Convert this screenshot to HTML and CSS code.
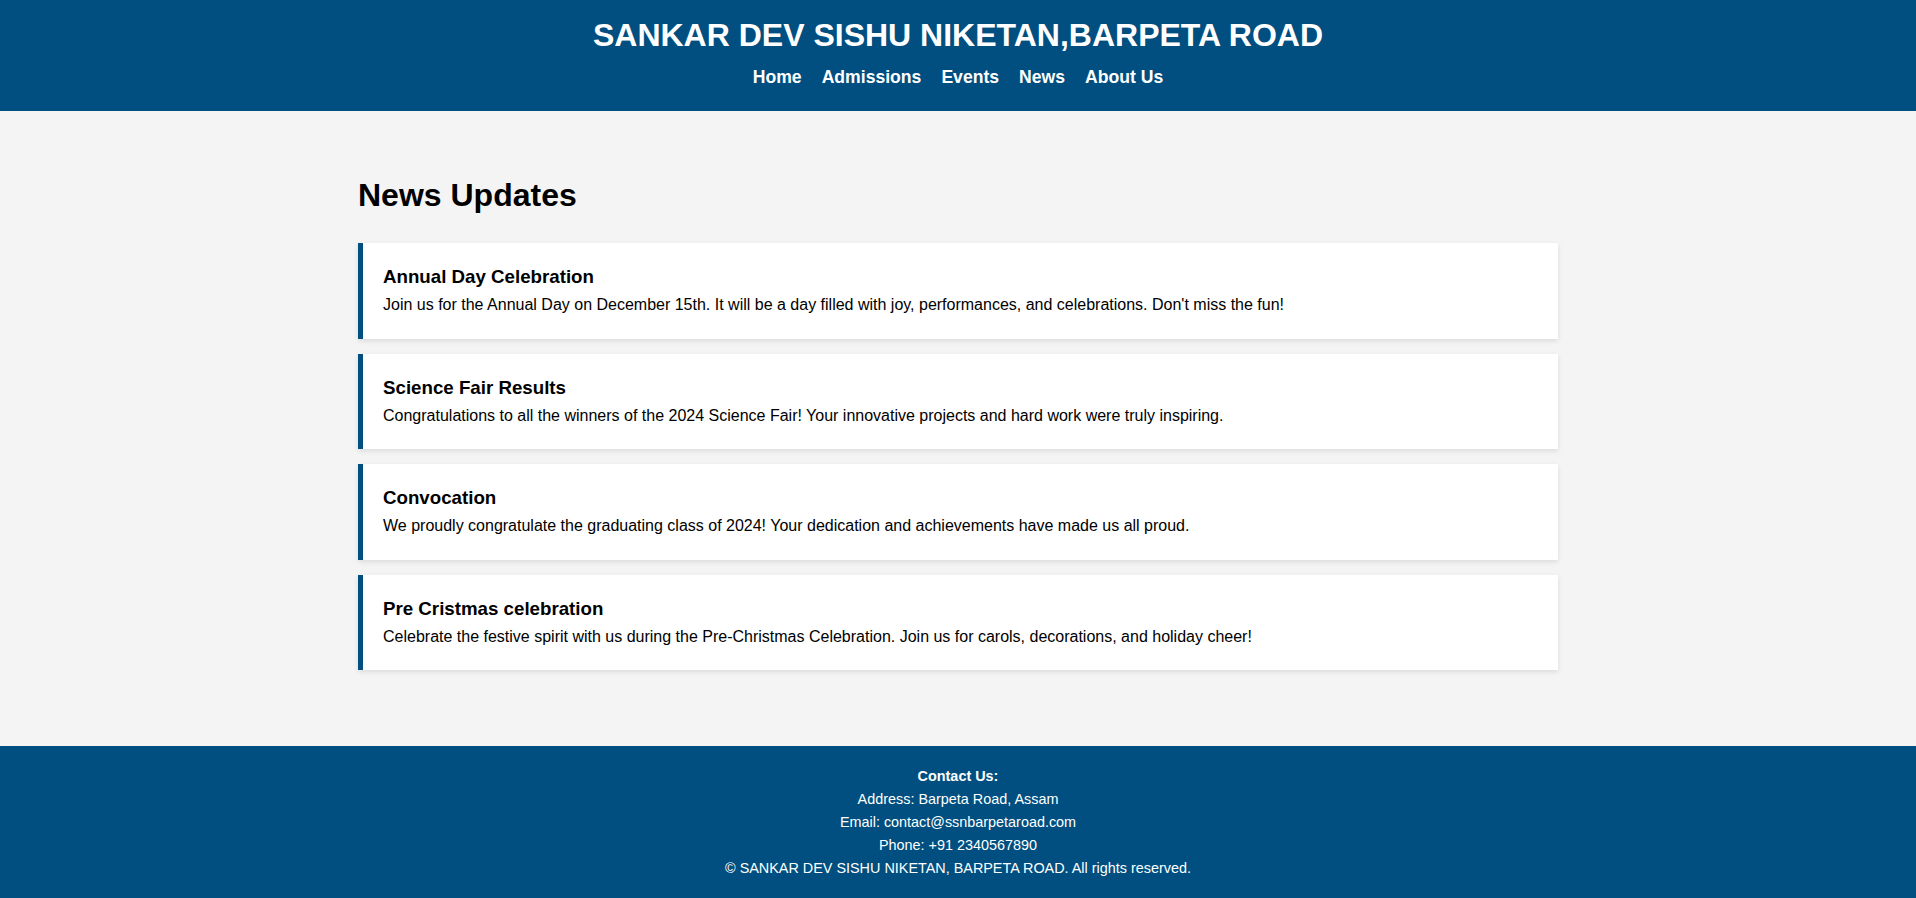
FILE: index.html
```html
<!DOCTYPE html>
<html lang="en">
<head>
<meta charset="utf-8">
<title>News Updates - SANKAR DEV SISHU NIKETAN</title>
<link rel="stylesheet" href="styles.css">
</head>
<body>
<header class="site-header">
  <h1 class="site-title">SANKAR DEV SISHU NIKETAN,BARPETA ROAD</h1>
  <nav class="site-nav">
    <a href="#">Home</a>
    <a href="#">Admissions</a>
    <a href="#">Events</a>
    <a href="#">News</a>
    <a href="#">About Us</a>
  </nav>
</header>
<main class="main">
  <section class="news">
    <h2 class="news-heading">News Updates</h2>
    <article class="news-item">
      <h3>Annual Day Celebration</h3>
      <p>Join us for the Annual Day on December 15th. It will be a day filled with joy, performances, and celebrations. Don't miss the fun!</p>
    </article>
    <article class="news-item">
      <h3>Science Fair Results</h3>
      <p>Congratulations to all the winners of the 2024 Science Fair! Your innovative projects and hard work were truly inspiring.</p>
    </article>
    <article class="news-item">
      <h3>Convocation</h3>
      <p>We proudly congratulate the graduating class of 2024! Your dedication and achievements have made us all proud.</p>
    </article>
    <article class="news-item">
      <h3>Pre Cristmas celebration</h3>
      <p>Celebrate the festive spirit with us during the Pre-Christmas Celebration. Join us for carols, decorations, and holiday cheer!</p>
    </article>
  </section>
</main>
<footer class="site-footer">
  <p><strong>Contact Us:</strong><br>
  Address: Barpeta Road, Assam<br>
  Email: contact@ssnbarpetaroad.com<br>
  Phone: +91 2340567890<br>
  &copy; SANKAR DEV SISHU NIKETAN, BARPETA ROAD. All rights reserved.</p>
</footer>
</body>
</html>
```

FILE: styles.css
```css
* {
  box-sizing: border-box;
}

html, body {
  margin: 0;
  padding: 0;
}

body {
  font-family: "Liberation Sans", Arial, sans-serif;
  background: #f4f4f4;
  color: #000;
}

.site-header {
  background: #004f80;
  color: #fff;
  text-align: center;
  padding: 17px 0 23.5px;
}

.site-title {
  margin: 0 0 12.5px;
  font-size: 32px;
  font-weight: bold;
}

.site-nav {
  display: flex;
  justify-content: center;
  gap: 20px;
}

.site-nav a {
  color: #fff;
  text-decoration: none;
  font-weight: bold;
  font-size: 17.6px;
}

.main {
  padding: 66px 20px 60.5px;
}

.news {
  max-width: 1200px;
  margin: 0 auto;
}

.news-heading {
  font-size: 32px;
  margin: 0 0 29px;
}

.news-item {
  background: #fff;
  border-left: 5px solid #004f80;
  padding: 23px 20px 24.5px;
  margin-bottom: 15px;
  box-shadow: 0 2px 5px rgba(0, 0, 0, 0.1);
}

.news-item h3 {
  margin: 0 0 8px;
  font-size: 18.72px;
}

.news-item p {
  margin: 0;
  font-size: 16px;
}

.site-footer {
  background: #004f80;
  color: #fff;
  text-align: center;
  padding: 19px 0;
  font-size: 14.4px;
  line-height: 23px;
}

.site-footer p {
  margin: 0;
}
```
